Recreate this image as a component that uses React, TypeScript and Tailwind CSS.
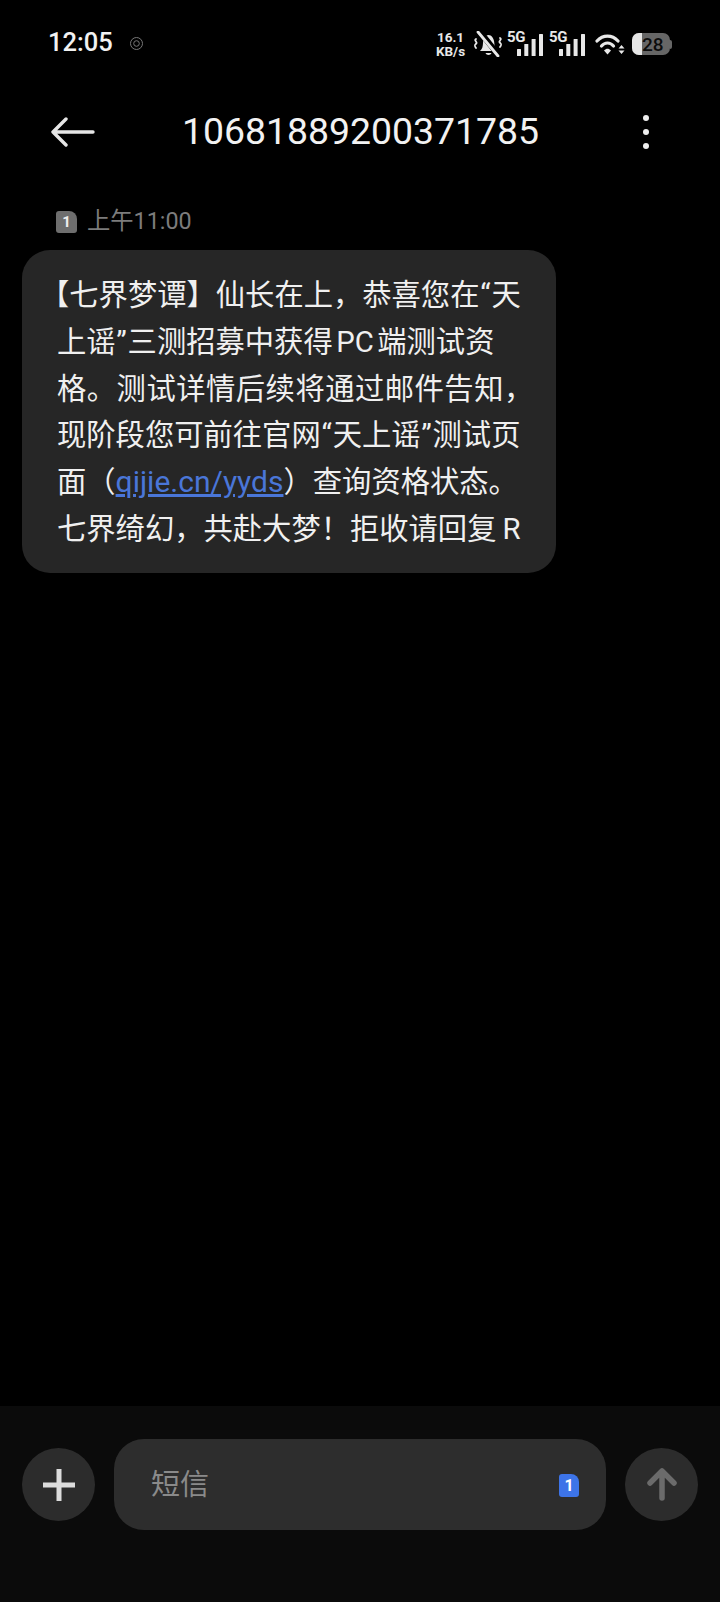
import React from 'react';

const mixed = { fontFamily: 'Roboto, "Noto Sans CJK SC", sans-serif' };

const Signal = () => (
    <div className="relative w-[36px] h-[24px] flex justify-end items-end">
        <span className="absolute left-0 top-[-2px] text-[15px] leading-[15px] font-bold text-[#e8e8e8] font-['Roboto',sans-serif] tracking-[-0.3px]">5G</span>
        <svg width="26" height="22" viewBox="0 0 26 22" fill="#e8e8e8">
            <rect x="0" y="15" width="4" height="7" rx="0.5" />
            <rect x="7.300" y="10" width="4" height="12" rx="0.5" />
            <rect x="14.600" y="5" width="4" height="17" rx="0.5" />
            <rect x="22" y="0" width="4" height="22" rx="0.5" />
        </svg>
    </div>
);

const BellOff = () => (
    <svg width="30" height="26" viewBox="0 0 30 26" fill="none" stroke="#e8e8e8" strokeLinecap="round">
        <path d="M7 20c2.500-2 2.800-5 3-8 .3-4.500 2.500-8 5.500-8s5.500 3.500 5.800 8c.2 3 .5 6 3 8z" fill="#e8e8e8" stroke="none" />
        <path d="M12.500 22h6c-.8 2.600-5.200 2.600-6 0z" fill="#e8e8e8" stroke="none" />
        <path d="M5.500 -1l20 25" stroke="#000000" strokeWidth="6" />
        <path d="M5 1l20 24" strokeWidth="2.800" />
        <path d="M3 8c-2.500 1.500 1.800 3 .3 4.500s-2.500 1.500-.3 4.500" strokeWidth="1.800" />
        <path d="M27 7c2.500 1.500-1.800 3-.3 4.500s2.500 1.500.3 4.500" strokeWidth="1.800" />
    </svg>
);

const Wifi = () => (
    <svg width="30" height="22" viewBox="0 0 30 22" fill="none" stroke="#e8e8e8" strokeLinecap="round">
        <path d="M2 8c6-6.500 15-6.500 21 0" strokeWidth="3.200" />
        <path d="M6.500 13c3.500-4 8.500-4 12 0" strokeWidth="3.200" />
        <path d="M9 17.500c2.500-2.500 4.500-2.500 7 0l-3.500 4z" fill="#e8e8e8" stroke="none" />
        <path d="M23.500 15.500l3-3.500 3 3.500zM23.500 17.500l3 3.500 3-3.500z" fill="#e8e8e8" stroke="none" />
    </svg>
);

const Battery = () => (
    <div className="flex items-center">
        <div className="relative w-[38px] h-[22px] rounded-[7px] bg-[#666666] overflow-hidden flex items-center pl-[10px]">
            <div className="absolute left-0 top-0 bottom-0 w-[10px] bg-[#e6e6e6]" />
            <span className="relative text-[19px] leading-none font-medium text-[#0c0c0c] font-['Roboto',sans-serif]">28</span>
        </div>
        <div className="w-[2px] h-[9px] bg-[#666666] rounded-r-sm" />
    </div>
);

const StatusBar = () => (
    <div className="flex items-center justify-between h-[88px] pl-[48px] pr-[48px] shrink-0">
        <div className="flex items-center gap-[17px] mt-[-2px]">
            <span className="text-[25.500px] leading-none font-medium text-[#f2f2f2] font-['Roboto',sans-serif]">12:05</span>
            <svg width="13" height="13" viewBox="0 0 13 13" fill="none" stroke="#777777">
                <circle cx="6.500" cy="6.500" r="6" />
                <circle cx="6.500" cy="6.500" r="2.800" />
            </svg>
        </div>
        <div className="flex items-center">
            <div className="w-[29px] flex flex-col items-center text-[#e8e8e8] font-bold font-['Roboto',sans-serif] text-[13.500px] leading-[14.500px] mr-[8px] whitespace-nowrap">
                <span>16.1</span>
                <span>KB/s</span>
            </div>
            <BellOff />
            <div className="flex gap-[6px] ml-[4px] mr-[10px]">
                <Signal />
                <Signal />
            </div>
            <Wifi />
            <div className="ml-[7px]">
                <Battery />
            </div>
        </div>
    </div>
);

const Header = () => (
    <div className="flex items-center justify-between h-[88px] pl-[51px] pr-[71px] shrink-0">
        <svg width="44" height="30" viewBox="0 0 44 30" fill="none" stroke="#e6e6e6" strokeWidth="3.400" strokeLinecap="round" strokeLinejoin="round">
            <path d="M42 15H2M15 2L2 15l13 13" />
        </svg>
        <h1 className="text-[37.400px] leading-none text-[#f2f2f2] font-['Roboto',sans-serif] mr-[17px]">10681889200371785</h1>
        <div className="flex flex-col gap-[8px]">
            <div className="w-[6px] h-[6px] rounded-full bg-[#eeeeee]" />
            <div className="w-[6px] h-[6px] rounded-full bg-[#eeeeee]" />
            <div className="w-[6px] h-[6px] rounded-full bg-[#eeeeee]" />
        </div>
    </div>
);

// quotes are narrow in the source font
const Quote = ({ children }: { children: string }) => (
    <span className="inline-block w-[12px] text-center">{children}</span>
);

const Message = () => (
    <div className="px-[22px] pt-[31px]">
        <div className="flex items-center gap-[10px] pl-[34px] h-[30px] mb-[13px]">
            <div className="w-[21px] h-[22px] rounded-[3px] rounded-tr-[8px] bg-[#6e6e6e] flex items-center justify-center text-[15px] font-bold leading-none text-[#eeeeee] font-['Roboto',sans-serif]">1</div>
            <span className="text-[23.300px] leading-none text-[#7c7c7c]" style={mixed}>上午11:00</span>
        </div>
        <div className="w-[534px] h-[323px] bg-[#262626] rounded-[28px] pl-[35px] pt-[22px] text-[29.300px] leading-[46.800px] text-[#f0f0f0] whitespace-nowrap" style={mixed}>
            <div><span className="ml-[-17px]">【</span>七界梦谭】仙长在上，恭喜您在<Quote>“</Quote>天</div>
            <div>上谣<Quote>”</Quote>三测招募中获得<span className="mx-[3.500px]">PC</span>端测试资</div>
            <div className="tracking-[0.5px]">格。测试详情后续将通过邮件告知，</div>
            <div>现阶段您可前往官网<Quote>“</Quote>天上谣<Quote>”</Quote>测试页</div>
            <div>面（<span className="text-[30px] text-[#4a76d8] underline">qijie.cn/yyds</span>）查询资格状态。</div>
            <div>七界绮幻，共赴大梦！拒收请回复<span className="ml-[6px]">R</span></div>
        </div>
    </div>
);

const Composer = () => (
    <div className="h-[196px] bg-[#0b0b0b] shrink-0 flex items-start px-[22px] pt-[33px] gap-[19px]">
        <div className="w-[73px] h-[73px] rounded-full bg-[#2c2c2c] flex items-center justify-center mt-[9px]">
            <svg width="32" height="32" viewBox="0 0 32 32" fill="none" stroke="#dcdcdc" strokeWidth="5">
                <path d="M16 0v32M0 16h32" />
            </svg>
        </div>
        <div className="w-[492px] h-[91px] rounded-[30px] bg-[#2d2d2d] flex items-center justify-between pl-[37px] pr-[27px]">
            <span className="text-[29px] leading-none text-[#8a8a8a] mt-[2px]" style={mixed}>短信</span>
            <div className="w-[20px] h-[23px] mt-[2px] rounded-[3px] rounded-tr-[8px] bg-[#3d74e8] flex items-center justify-center text-[16px] font-bold leading-none text-white font-['Roboto',sans-serif]">1</div>
        </div>
        <div className="w-[73px] h-[73px] rounded-full bg-[#2c2c2c] flex items-center justify-center mt-[9px]">
            <svg width="30" height="33" viewBox="0 0 30 33" fill="none" stroke="#6b6b6b" strokeWidth="5.500" strokeLinecap="round" strokeLinejoin="round">
                <path d="M15 30V4M3 15L15 3l12 12" />
            </svg>
        </div>
    </div>
);

export default function App() {
    return (
        <div className="w-[720px] h-[1602px] bg-black flex flex-col overflow-hidden">
            <StatusBar />
            <Header />
            <div className="flex-1">
                <Message />
            </div>
            <Composer />
        </div>
    );
}
